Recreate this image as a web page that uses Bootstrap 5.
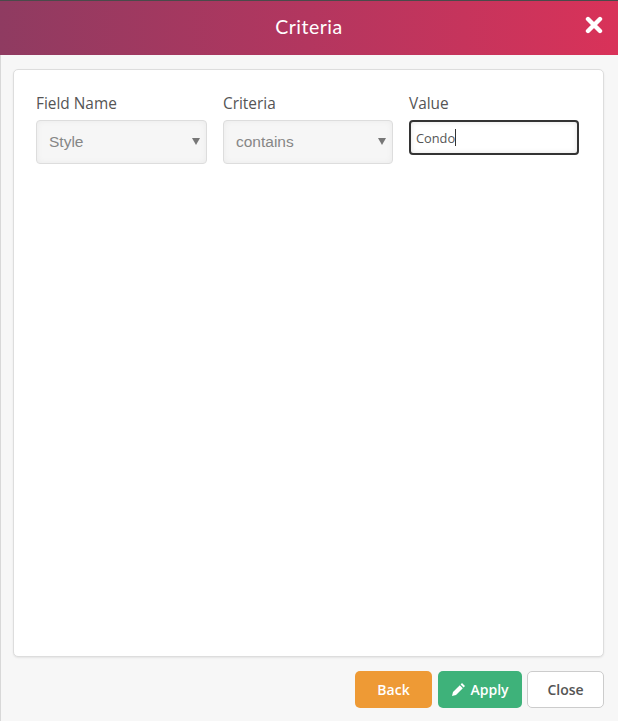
<!DOCTYPE html>
<html lang="en">
<head>
  <meta charset="UTF-8">
  <meta name="viewport" content="width=device-width, initial-scale=1">
  <title>Criteria</title>
  <link href="https://cdn.jsdelivr.net/npm/bootstrap@5.3.3/dist/css/bootstrap.min.css" rel="stylesheet">
  <style>
    html, body {
      height: 100%;
    }
    body {
      background: #f7f7f7;
      font-family: "Open Sans", sans-serif;
      color: #555;
      overflow: hidden;
    }
    #dialog {
      height: 721px;
      border-top: 1px solid #4a4a4a;
      box-shadow: inset 1px 0 0 #d8d8d8;
    }
    #dialog-head {
      height: 54px;
      padding-bottom: 2px;
      background: linear-gradient(90deg, #8f3b61 0%, #b3365f 50%, #d93259 100%);
    }
    #dialog-title {
      font-family: Lato, sans-serif;
      font-size: 19.5px;
      color: #fff;
      letter-spacing: .5px;
    }
    #dialog-close {
      right: 15px;
      top: 15px;
      width: 18px;
      height: 18px;
      line-height: 0;
    }
    #filter-box {
      height: 588px;
      margin: 14px 14px 0 13px;
      padding: 24px 24px 0 22px;
      background: #fff;
      border: 1px solid #ddd;
      border-radius: 5px;
      box-shadow: 0 1px 2px rgba(0, 0, 0, .08);
    }
    #filter-grid {
      display: grid;
      grid-template-columns: 171px 170px 170px;
      column-gap: 16px;
    }
    .field-label {
      font-size: 15.4px;
      line-height: 20px;
      margin-bottom: 6px;
      color: #555;
    }
    .form-select.field-select {
      height: 44px;
      padding: 0 12px;
      font-family: "Liberation Sans", sans-serif;
      font-size: 15.5px;
      color: #868686;
      background-color: #f6f6f6;
      background-image: none;
      border: 1px solid #ddd;
      border-radius: 4px;
      box-shadow: inset 0 0 6px rgba(0, 0, 0, .05);
    }
    .select-arrow {
      right: 7px;
      top: 17px;
      width: 8px;
      height: 8px;
      pointer-events: none;
    }
    .field-input {
      height: 35px;
      padding: 0 5px;
      font-size: 12.8px;
      color: #555;
      border: 2px solid #333;
      border-radius: 4px;
      box-shadow: inset 0 0 5px rgba(0, 0, 0, .12);
    }
    .input-caret {
      left: 46px;
      top: 9px;
      width: 1px;
      height: 17px;
      background: #333;
    }
    #dialog-foot {
      gap: 5px;
      margin: 14px 14px 0 0;
    }
    .foot-btn {
      height: 37px;
      padding: 0;
      font-size: 14px;
      font-weight: 600;
      border-radius: 5px;
    }
    #btn-back {
      width: 77px;
      margin-right: 1px;
      color: #fff;
      background: #ee9a35;
      border: 0;
    }
    #btn-apply {
      width: 84px;
      color: #fff;
      background: #3eb27a;
      border: 0;
    }
    #btn-close {
      width: 77px;
      color: #555;
      background: #fff;
      border: 1px solid #ccc;
    }
  </style>
</head>
<body>
  <div id="dialog" class="d-flex flex-column">
    <div id="dialog-head" class="position-relative d-flex align-items-center justify-content-center flex-shrink-0">
      <span id="dialog-title">Criteria</span>
      <span id="dialog-close" class="position-absolute">
        <svg width="18" height="18" viewBox="0 0 18 18"><path d="M3 3L15 15M15 3L3 15" stroke="#fff" stroke-width="4.4" stroke-linecap="round" fill="none"/></svg>
      </span>
    </div>

    <div id="filter-box">
      <div id="filter-grid">
        <div>
          <label class="field-label d-block">Field Name</label>
          <div class="position-relative">
            <select class="form-select field-select" disabled><option>Style</option></select>
            <svg class="select-arrow position-absolute" viewBox="0 0 8 8"><path d="M0 1H8L4 8Z" fill="#777"/></svg>
          </div>
        </div>
        <div>
          <label class="field-label d-block">Criteria</label>
          <div class="position-relative">
            <select class="form-select field-select" disabled><option>contains</option></select>
            <svg class="select-arrow position-absolute" viewBox="0 0 8 8"><path d="M0 1H8L4 8Z" fill="#777"/></svg>
          </div>
        </div>
        <div>
          <label class="field-label d-block">Value</label>
          <div class="position-relative">
            <input type="text" class="form-control field-input" value="Condo">
            <span class="input-caret position-absolute"></span>
          </div>
        </div>
      </div>
    </div>

    <div id="dialog-foot" class="d-flex justify-content-end">
      <button type="button" class="btn foot-btn" id="btn-back">Back</button>
      <button type="button" class="btn foot-btn d-flex align-items-center justify-content-center gap-1" id="btn-apply">
        <svg width="15" height="15" viewBox="0 0 15 15"><path d="M11 1L14 4L12.6 5.4L9.6 2.4ZM8.8 3.2L11.8 6.2L5 13L1 14L2 10Z" fill="#fff"/></svg>
        Apply
      </button>
      <button type="button" class="btn foot-btn" id="btn-close">Close</button>
    </div>
  </div>

  <script src="https://cdn.jsdelivr.net/npm/bootstrap@5.3.3/dist/js/bootstrap.bundle.min.js"></script>
</body>
</html>
